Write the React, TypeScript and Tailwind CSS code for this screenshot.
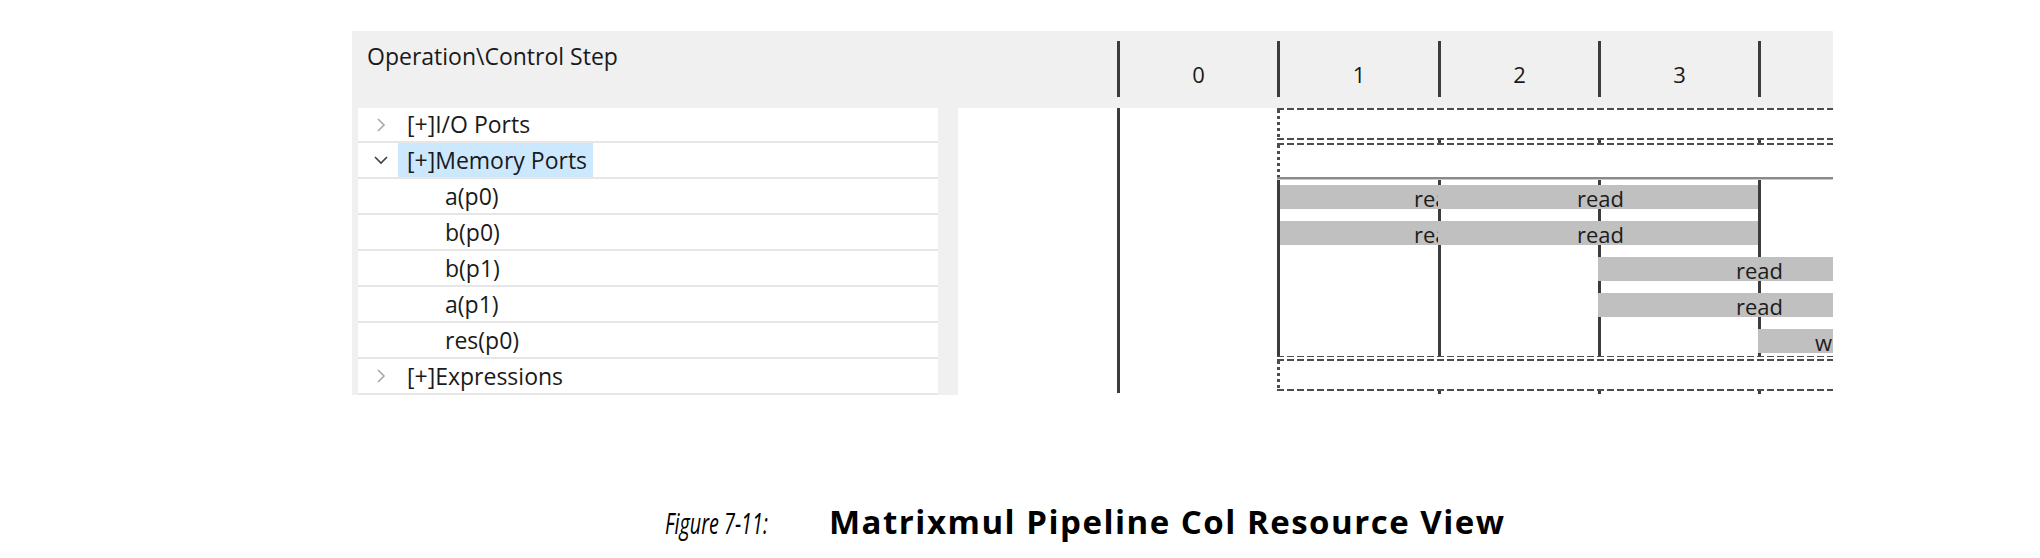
import React from "react";

const FONT = "font-['Open_Sans',sans-serif]";
const HDASH =
  "bg-[repeating-linear-gradient(to_right,#4d4d4d_0px,#4d4d4d_7px,transparent_7px,transparent_10px)]";
const VDASH =
  "bg-[repeating-linear-gradient(to_bottom,#4d4d4d_0px,#4d4d4d_3px,transparent_3px,transparent_6px)]";

function ChevRight() {
  return (
    <svg width="10" height="16" viewBox="0 0 10 16">
      <path d="M2 2 L8 8 L2 14" fill="none" stroke="#a8a8a8" strokeWidth="1.6" />
    </svg>
  );
}

function ChevDown() {
  return (
    <svg width="16" height="10" viewBox="0 0 16 10">
      <path d="M2 2 L8 8 L14 2" fill="none" stroke="#404040" strokeWidth="1.6" />
    </svg>
  );
}

type TreeRow = {
  label: string;
  kind: "group" | "child";
  open?: boolean;
  selected?: boolean;
  first?: boolean;
};

const treeRows: TreeRow[] = [
  { label: "[+]I/O Ports", kind: "group", first: true },
  { label: "[+]Memory Ports", kind: "group", open: true, selected: true },
  { label: "a(p0)", kind: "child" },
  { label: "b(p0)", kind: "child" },
  { label: "b(p1)", kind: "child" },
  { label: "a(p1)", kind: "child" },
  { label: "res(p0)", kind: "child" },
  { label: "[+]Expressions", kind: "group" },
];

type Seg = { l: number; w: number; tx: number; t: string };

const barRows: Seg[][] = [
  [
    { l: 3, w: 158, tx: 134, t: "read" },
    { l: 161, w: 320, tx: 139, t: "read" },
  ],
  [
    { l: 3, w: 158, tx: 134, t: "read" },
    { l: 161, w: 320, tx: 139, t: "read" },
  ],
  [{ l: 321, w: 235, tx: 138, t: "read" }],
  [{ l: 321, w: 235, tx: 138, t: "read" }],
  [{ l: 481, w: 75, tx: 57, t: "write" }],
];

function SolidCells() {
  return (
    <>
      <div className="w-[161px] h-full border-l-[3px] border-[#3c3c3c]" />
      <div className="w-[160px] h-full border-l-[3px] border-[#3c3c3c]" />
      <div className="w-[160px] h-full border-l-[3px] border-[#3c3c3c]" />
      <div className="flex-1 h-full border-l-[3px] border-[#3c3c3c]" />
    </>
  );
}

function Ticks() {
  return (
    <div className="flex h-[3px]">
      <div className="w-[161px]" />
      <div className="w-[160px]">
        <div className="w-[3px] h-[3px] bg-[#3c3c3c]" />
      </div>
      <div className="w-[160px]">
        <div className="w-[3px] h-[3px] bg-[#3c3c3c]" />
      </div>
      <div className="flex-1">
        <div className="w-[3px] h-[3px] bg-[#3c3c3c]" />
      </div>
    </div>
  );
}

function Timeline() {
  return (
    <div className="flex-1 flex flex-col bg-white">
      {/* I/O Ports group row */}
      <div className="h-[35px] flex flex-col">
        <div className={`h-[2px] ${HDASH}`} />
        <div className="flex-1 flex">
          <div className={`w-[3px] ${VDASH}`} />
        </div>
        <div className={`h-[2px] ${HDASH}`} />
        <Ticks />
      </div>
      {/* Memory Ports group row */}
      <div className="h-[37px] flex flex-col">
        <div className={`h-[2px] ${HDASH}`} />
        <div className="flex-1 flex">
          <div className={`w-[3px] ${VDASH}`} />
        </div>
        <div className="h-[2px] bg-[#8a8a8a]" />
        <div className="h-[1px] bg-[#c8c8c8]" />
      </div>
      {/* Children rows with bars */}
      {barRows.map((segs, i) => (
        <div key={i} className={`relative flex ${i === 4 ? "h-[32px]" : "h-[36px]"}`}>
          <SolidCells />
          {segs.map((s, j) => (
            <div
              key={j}
              className="absolute top-[5px] h-[24px] bg-[#c0c0c0] overflow-hidden"
              style={{ left: s.l, width: s.w }}
            >
              <span
                className="absolute top-[0px] text-[22px] leading-[24px] text-[#1c1c1c] whitespace-nowrap translate-y-[1px]"
                style={{ left: s.tx }}
              >
                {s.t}
              </span>
            </div>
          ))}
        </div>
      ))}
      {/* Expressions group row */}
      <div className="h-[38px] flex flex-col">
        <div className={`h-[1px] ${HDASH}`} />
        <div className="h-[2px]" />
        <div className={`h-[2px] ${HDASH}`} />
        <div className="flex-1 flex">
          <div className={`w-[3px] ${VDASH}`} />
        </div>
        <div className={`h-[2px] ${HDASH}`} />
        <Ticks />
      </div>
    </div>
  );
}

export default function App() {
  return (
    <div className={`w-[2040px] h-[558px] bg-white overflow-hidden ${FONT} text-[#1a1a1a]`}>
      <div className="ml-[352px] pt-[31px] w-[1481px] flex flex-col">
        {/* Header */}
        <div className="h-[77px] bg-[#f0f0f0] flex text-[23px] overflow-hidden">
          <div className="w-[765px] shrink-0 pl-[15px] pt-[10px] leading-[30px]">
            Operation\Control Step
          </div>
          {[
            { n: "0", w: "w-[160px]" },
            { n: "1", w: "w-[161px]" },
            { n: "2", w: "w-[160px]" },
            { n: "3", w: "w-[160px]" },
            { n: "4", w: "w-[160px]" },
          ].map((c) => (
            <div key={c.n} className={`${c.w} shrink-0 flex`}>
              <div className="w-[3px] mt-[10px] h-[56px] bg-[#3c3c3c]" />
              <div className="flex-1 text-center text-[22px] pt-[28px] leading-[30px]">{c.n}</div>
            </div>
          ))}
        </div>
        {/* Body */}
        <div className="flex h-[287px] overflow-hidden">
          <div className="w-[606px] shrink-0 bg-[#f0f0f0] pl-[6px] pr-[20px] text-[23px]">
            {treeRows.map((r) => (
              <div
                key={r.label}
                className={`${r.first ? "h-[35px]" : "h-[36px]"} bg-white border-b-2 border-[#e6e6e6] flex items-stretch`}
              >
                {r.kind === "group" ? (
                  <>
                    <div className="w-[40px] flex items-center pl-[18px]">
                      {r.open ? (
                        <div className="-ml-[3px]">
                          <ChevDown />
                        </div>
                      ) : (
                        <ChevRight />
                      )}
                    </div>
                    <div
                      className={`flex items-center pl-[9px] pr-[6px] ${r.selected ? "bg-[#cce8ff]" : ""}`}
                    >
                      {r.label}
                    </div>
                  </>
                ) : (
                  <div className="flex items-center pl-[87px]">{r.label}</div>
                )}
              </div>
            ))}
          </div>
          <div className="w-[159px] shrink-0 bg-white" />
          <div className="w-[3px] shrink-0 h-[285px] bg-[#3c3c3c]" />
          <div className="w-[157px] shrink-0 bg-white" />
          <Timeline />
        </div>
      </div>
      {/* Caption */}
      <div className="mt-[107px] pl-[665px] flex items-baseline leading-[40px] text-black">
        <span className="inline-block italic text-[30px] w-[164px] scale-x-66 origin-left whitespace-nowrap">
          Figure 7-11:
        </span>
        <span className="font-bold text-[33px] tracking-[1.5px]">Matrixmul Pipeline Col Resource View</span>
      </div>
    </div>
  );
}
